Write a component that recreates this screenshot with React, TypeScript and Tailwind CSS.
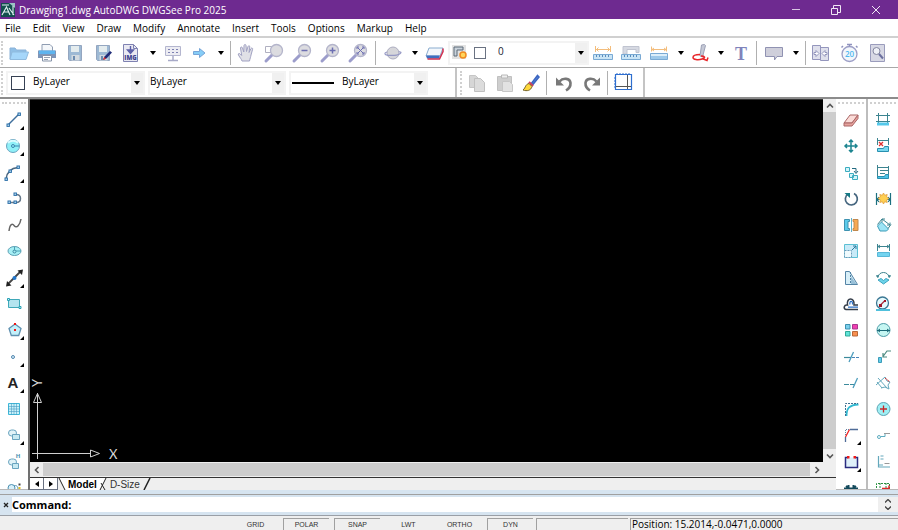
import type { ReactNode } from "react";
import clsx from "clsx";

interface IconProps {
  children: ReactNode;
  flyout?: boolean;
}

// Every icon is drawn on the same 20px grid
const Icon = ({ children, flyout }: IconProps) => (
  <svg viewBox="0 0 20 20" className="size-5 shrink-0 overflow-visible" fill="none" aria-hidden="true">
    {children}
    {flyout && <path d="M20 16v4h-4z" fill="#000" />}
  </svg>
);

const Node = ({ x, y }: { x: number; y: number }) => (
  <rect x={x - 1} y={y - 1} width="2.4" height="2.4" fill="#bfe0f5" stroke="#2c6fa8" strokeWidth="1" />
);

interface Tool {
  label: string;
  icon: ReactNode;
  flyout?: boolean;
}

/* ---------- shared pieces ---------- */

const ToolButton = ({ label, children, narrow }: { label: string; children: ReactNode; narrow?: boolean }) => (
  <button
    type="button"
    title={label}
    aria-label={label}
    className={clsx("flex h-7 shrink-0 items-center justify-center hover:bg-sky-100", narrow ? "w-6" : "w-7")}
  >
    <Icon>{children}</Icon>
  </button>
);

const Triangle = () => (
  <svg viewBox="0 0 6 4" className="h-1 w-1.5" aria-hidden="true">
    <path d="M0 0h6L3 4z" fill="#000" />
  </svg>
);

const MenuCaret = ({ label }: { label: string }) => (
  <button type="button" aria-label={label} className="flex h-7 w-4 shrink-0 items-center justify-center hover:bg-sky-100">
    <Triangle />
  </button>
);

const Divider = ({ wide }: { wide?: boolean }) => (
  <div className={clsx("flex h-6 shrink-0 justify-center", wide ? "w-[7px]" : "w-[3px]")}>
    <div className="w-px bg-[#b0b0b0]" />
  </div>
);

const Grip = () => <div className="mx-px h-6 w-0 shrink-0 border-l-2 border-dotted border-[#d0d0d0]" />;

interface ComboProps {
  label: string;
  value: string;
  lead?: ReactNode;
  className?: string;
}

const Combo = ({ label, value, lead, className }: ComboProps) => (
  <div className={clsx("flex h-6 shrink-0 items-center border-2 border-[#f3f3f3] bg-white", className)}>
    {lead}
    <select
      aria-label={label}
      defaultValue={value}
      className="h-5 min-w-0 flex-1 appearance-none bg-transparent pb-1 text-[10px] leading-4 outline-none"
    >
      <option>{value}</option>
    </select>
    <span className="pointer-events-none flex h-5 w-3 items-center justify-center bg-[#f0f0f0]">
      <Triangle />
    </span>
  </div>
);

/* ---------- title and menu ---------- */

const TitleBar = () => (
  <header className="flex h-[19px] shrink-0 items-center bg-[#6e2a90] pr-0.5 pl-px text-white">
    <svg viewBox="0 0 14 14" className="size-3.5" aria-hidden="true">
      <path d="M0 0h14v14H0z" fill="#14504f" />
      <path d="M8 0h6v5z" fill="#9bc4c4" />
      <path d="M1 2h7M1 12 5.5 4 9 12M3 9h5M8 5l5 7M12 3v9" stroke="#e4f4f4" strokeWidth="1.1" fill="none" />
    </svg>
    <h1 className="ml-1 flex-1 text-[10px] leading-4">Drawging1.dwg AutoDWG DWGSee Pro 2025</h1>
    <button type="button" aria-label="Minimize" className="flex h-4 w-10 items-center justify-center">
      <span className="h-px w-2 bg-[#d9c6e2]" />
    </button>
    <button type="button" aria-label="Restore" className="flex h-4 w-10 items-center justify-center">
      <svg viewBox="0 0 10 10" className="size-2.5" fill="none" stroke="#f0e6f4" aria-hidden="true">
        <path d="M.5 3.500h6v6h-6zM2.500 3V.5h7v7H7" />
      </svg>
    </button>
    <button type="button" aria-label="Close" className="flex h-4 w-10 items-center justify-center">
      <svg viewBox="0 0 10 10" className="size-2.5" fill="none" stroke="#f0e6f4" aria-hidden="true">
        <path d="m1 1 8 8M9 1 1 9" />
      </svg>
    </button>
  </header>
);

const menus = ["File", "Edit", "View", "Draw", "Modify", "Annotate", "Insert", "Tools", "Options", "Markup", "Help"];

const MenuBar = () => (
  <nav className="flex h-[19px] shrink-0 items-center gap-3 border-b-2 border-[#d0d0d0] bg-white px-[5px] text-[10px] leading-4">
    {menus.map((menu) => (
      <button key={menu} type="button">
        {menu}
      </button>
    ))}
  </nav>
);

/* ---------- toolbars ---------- */

const Floppy = () => (
  <>
    <path d="M3.5 2.500h13v15h-12l-1-1z" fill="#9db9d4" stroke="#94a6c0" />
    <path d="M6 3h8v6H6z" fill="#e4ecee" />
    <path d="M6.500 12h8v5.500h-8z" fill="#d3dae0" />
    <path d="M8 13h2v4H8z" fill="#6c8cb0" />
  </>
);

const Magnifier = ({ children }: { children?: ReactNode }) => (
  <>
    <path d="m2 18 6-6" stroke="#9c9dcb" strokeWidth="3" strokeLinecap="round" />
    <circle cx="12.500" cy="7.500" r="6" fill="#dcdce0" stroke="#b4b5cb" strokeWidth="1.300" />
    <g stroke="#6c6fb2" strokeWidth="1.500">{children}</g>
  </>
);

const Ruler = () => (
  <>
    <path d="M.500 11.500h19v5H.500z" fill="#c9e4f5" stroke="#7aaad4" />
    <path d="M3.500 12v2M6.500 12v2M9.500 12v2M12.500 12v2M15.500 12v2" stroke="#5a8cbc" />
  </>
);

const StandardToolbar = () => (
  <div role="toolbar" aria-label="Standard" className="flex h-[30px] shrink-0 items-center border-b border-[#a8a8a8] bg-white">
    <Grip />
    <div className="w-px shrink-0" />
    <ToolButton label="Open">
      <path d="M1 16V5h5l1.500 2H17v3" fill="#8fbfe6" stroke="#8bb2d8" />
      <path d="M3 9h16.500L17 16.500H1z" fill="#a5d6fa" stroke="#8fbade" />
    </ToolButton>
    <ToolButton label="Print">
      <path d="M5 8V1.500h8L15.500 4v4" fill="#f4f7fa" stroke="#8f9db2" />
      <path d="M1 7.500h18V15H1z" fill="#7e95b8" />
      <path d="M2 7.500h16V11H2z" fill="#5eb4ee" />
      <path d="M5.500 12.500h9v5.500h-9z" fill="#fff" stroke="#8593a8" />
      <path d="M7 14.500h6M7 16.500h4" stroke="#9aa5b4" />
    </ToolButton>
    <ToolButton label="Save"><Floppy /></ToolButton>
    <ToolButton label="Save as">
      <Floppy />
      <path d="m10 17 1.500-3.500L17 8l2 1.500-5.500 6z" fill="#202c78" />
      <path d="m10 17 1.200-3 2 1.800z" fill="#e03030" />
    </ToolButton>
    <ToolButton label="Export image">
      <path d="M2.500 1.500h10l4 4v13h-14z" fill="#e9e9f2" stroke="#7f82b2" />
      <path d="M12.500 1.500v4h4" stroke="#7f82b2" />
      <path d="M9.500 3v4M6.500 7h6l-3 3.500z" stroke="#5c60a8" strokeWidth="1.400" fill="#5c60a8" />
      <text x="9.500" y="17" textAnchor="middle" fontSize="6" fontWeight="800" fill="#3f438f">IMG</text>
    </ToolButton>
    <MenuCaret label="Export options" />
    <ToolButton label="Slides" narrow>
      <path d="M2.500 3.500h15v9h-15z" fill="#ececf2" stroke="#b4b6cf" />
      <path d="M5 6.500h2M9 6.500h2M13 6.500h2M5 9.500h2M9 9.500h2M13 9.500h2" stroke="#7c80b2" />
      <path d="M10 13v4M5 17.500h10" stroke="#a8aac8" strokeWidth="1.500" />
    </ToolButton>
    <ToolButton label="Next view">
      <path d="M4.500 8.500h6V5.500l5.500 4.500-5.500 4.500v-3h-6z" fill="#86cdf7" stroke="#76a5d8" />
    </ToolButton>
    <MenuCaret label="View options" />
    <Divider />
    <ToolButton label="Pan">
      <path
        d="M6 18c-.5-2-2-3-3.500-6-.8-1.500.7-2 1.700-1l1.500 1.500L4.500 5c0-1.200 1.500-1.500 2 0l1.300 4L8 2.500c.2-1.300 1.900-1.300 2 0l.5 6L12 3.500c.5-1.200 2-.8 1.800.5L13 9.500l2-4c.6-1 2-.4 1.600.8L15 12c-.3 2-1 3.500-1.500 6z"
        fill="#e0e0e6"
        stroke="#a0a1c2"
      />
    </ToolButton>
    <ToolButton label="Zoom window">
      <path d="M1.500 3.500h7v6h-7z" stroke="#b0b0c0" />
      <Magnifier />
    </ToolButton>
    <ToolButton label="Zoom out"><Magnifier><path d="M9.500 7.500h6" /></Magnifier></ToolButton>
    <ToolButton label="Zoom in"><Magnifier><path d="M9.500 7.500h6M12.500 4.500v6" /></Magnifier></ToolButton>
    <ToolButton label="Zoom extents">
      <Magnifier><path d="m9.500 4.500 6 6M15.500 4.500l-6 6M9 6V4h2M14 4h2v2M9 9v2h2M14 11h2V9" strokeWidth="1" /></Magnifier>
    </ToolButton>
    <Divider wide />
    <ToolButton label="Orbit">
      <circle cx="10" cy="10" r="6" fill="#d6d6da" stroke="#acadc0" />
      <path d="M4 9c-3 1-3 3 1 3.300 4 .300 10-.300 12-1.600 2-1.300.5-2.200-1.300-1.900" stroke="#9598c4" strokeWidth="1.200" />
    </ToolButton>
    <MenuCaret label="Orbit options" />
    <ToolButton label="Erase markup" narrow>
      <path d="M4 5h14l-3 8H1z" fill="#f4f8fc" stroke="#8aaccf" />
      <path d="M1 12.500h13.500v3H2z" fill="#3f6fc0" />
      <path d="M18 5.500v3L14.500 16h-12" stroke="#d03050" strokeWidth="1.500" />
    </ToolButton>
    <Combo
      label="Layer"
      value="0"
      className="ml-px w-[141px] text-[#223]"
      lead={
        <>
          <Icon>
            <path d="M2 2h14v14H2z" fill="#e2e2e2" />
            <path d="M4 4h9v3H7v6H4z" fill="#c9d2da" stroke="#5d6b78" />
            <circle cx="13" cy="12" r="3" fill="#ffd55c" stroke="#f08a20" strokeWidth="1.500" />
          </Icon>
          <span className="mr-3 ml-1 size-3 border border-gray-500 bg-white" />
        </>
      }
    />
    <ToolButton label="Distance">
      <Ruler />
      <path d="M2.500 3v6M17.500 3v6M3 6.500h14M5.500 4.500l-2 2 2 2M14.500 4.500l2 2-2 2" stroke="#f3bd7c" />
    </ToolButton>
    <ToolButton label="Measure polyline">
      <path d="M2 11V3.500h16v6h-3v-3H6V11z" fill="#d6d9e2" stroke="#c0c4d0" />
      <Ruler />
    </ToolButton>
    <ToolButton label="Area">
      <path d="M1.500 10.500h17v6h-17z" fill="#9ec9ea" stroke="#7aaad4" />
      <path d="M2 11h16v2H2z" fill="#dceefa" />
      <path d="M2.500 3.500v5M17.500 3.500v5M3 6.500h14M5 5 3 6.500 5 8M15 5l2 1.500L15 8" stroke="#f3bd7c" />
    </ToolButton>
    <MenuCaret label="Measure options" />
    <ToolButton label="Freehand markup" narrow>
      <path d="m9 13 1.500-11 3-.5 1 1L11.500 14z" fill="#c5c9d6" stroke="#9ca0b6" />
      <path d="M9 11.500c-4 0-7 1-7 3s5 3 9 1.500 3-3-1-3M11 15.500l5 2 1-3" stroke="#e8262a" strokeWidth="1.500" />
    </ToolButton>
    <MenuCaret label="Markup options" />
    <ToolButton label="Text" narrow>
      <text x="10" y="16.500" textAnchor="middle" fontSize="18" className="font-['Liberation_Serif',serif] font-bold" fill="#8083bb">T</text>
    </ToolButton>
    <Divider wide />
    <ToolButton label="Callout">
      <path d="M1.500 4.500h17v9H13l-2.500 3.500v-3.500h-9z" fill="#cfcfdb" stroke="#9092b2" />
    </ToolButton>
    <MenuCaret label="Callout options" />
    <Divider />
    <ToolButton label="Compare">
      <path d="M1.500 2.500h8v14h-8zM9.500 4.500h8v13h-8z" fill="#dfe0ec" stroke="#9496bd" />
      <path d="M3 9.500h2v-2l3 3-3 3v-2H3zM16 9.500h-2v-2l-3 3 3 3v-2h2z" fill="#fff" stroke="#9496bd" />
    </ToolButton>
    <ToolButton label="Timer">
      <circle cx="10.500" cy="11" r="7.500" fill="#f3f7fb" stroke="#9c9ec6" strokeWidth="1.300" />
      <path d="M8 1.500h5M10.500 1.500v2M4 3 2.500 4.500M17 3l1.500 1.500" stroke="#8f92be" strokeWidth="1.500" />
      <text x="10.500" y="14" textAnchor="middle" fontSize="8" fontWeight="600" fill="#4fb8f0">20</text>
    </ToolButton>
    <ToolButton label="Find">
      <path d="M3.500 1.500h14v17h-14z" fill="#d7d8e4" stroke="#9a9cbc" />
      <circle cx="9.500" cy="8" r="3.500" fill="#eef0f6" stroke="#83869f" />
      <path d="m12 11 4 4.500" stroke="#6c6f9f" strokeWidth="2" />
    </ToolButton>
  </div>
);

const PropertiesToolbar = () => (
  <div role="toolbar" aria-label="Properties" className="flex h-[31px] shrink-0 items-center border-b-2 border-[#8c8c8c] bg-white">
    <Grip />
    <div className="ml-0.5 flex gap-[3px]">
      <Combo
        label="Color"
        value="ByLayer"
        className="w-[139px]"
        lead={<span className="mr-2 ml-[3px] size-3.5 border border-gray-700 bg-white" />}
      />
      <Combo label="Linetype" value="ByLayer" className="w-[138px]" />
      <Combo label="Lineweight" value="ByLayer" className="w-[139px]" lead={<span className="mr-2 ml-px h-0.5 w-[42px] bg-black" />} />
    </div>
    <div className="ml-[27px] h-full w-0.5 shrink-0 bg-[#c4c4c4]" />
    <div className="ml-0.5 flex items-center">
      <Grip />
      <ToolButton label="Copy">
        <path d="M2.500 2.500h6l3 3v9h-9z" fill="#d6d6d6" stroke="#c6c6c6" />
        <path d="M7.500 5.500h6l4 4v9h-10z" fill="#dcdcdc" stroke="#c0c0c0" />
      </ToolButton>
      <ToolButton label="Paste">
        <path d="M2.500 3.500h14v14h-14z" fill="#cecece" stroke="#c0c0c0" />
        <path d="M6.500 2h6v3h-6z" fill="#efefef" stroke="#b8b8b8" />
        <path d="M7.500 8.500h7l3 3v7h-10z" fill="#e2e2e2" stroke="#c6c6c6" />
      </ToolButton>
      <ToolButton label="Match properties" narrow>
        <path d="m10 11 6.500-8.500 1.500 1.500-6.500 8z" fill="#5a8ae0" stroke="#3c66c0" strokeWidth="1.500" />
        <path d="m8 9 4 4" stroke="#d04060" strokeWidth="2" />
        <path d="M8 10.500c-4 1-3 4-6 6.500 4 1.500 8 .500 9-3.500z" fill="#ffd83c" stroke="#74642a" />
      </ToolButton>
      <Divider wide />
      <ToolButton label="Undo">
        <path d="M5.500 8.500C9 4.500 16 5 16.500 10c.200 3-2 6-4.500 7.500" stroke="#787878" strokeWidth="2.600" />
        <path d="M2 4.500v8h8z" fill="#787878" />
      </ToolButton>
      <ToolButton label="Redo">
        <path d="M14.500 8.500C11 4.500 4 5 3.500 10c-.200 3 2 6 4.500 7.500" stroke="#787878" strokeWidth="2.600" />
        <path d="M18 4.500v8h-8z" fill="#787878" />
      </ToolButton>
      <Divider />
      <ToolButton label="Ruler">
        <path d="M2.500 1.500h16v15h-16z" stroke="#2e6fd0" strokeWidth="1.200" />
        <path d="M4 0v2M7 0v2M10 0v2M13 0v2M16 0v2M1 5h2M1 8h2M1 11h2M1 14h2" stroke="#2e6fd0" />
        <path d="M14.500 2v14M3 13.500h15" stroke="#555" />
      </ToolButton>
    </div>
    <div className="ml-1.5 h-full w-0.5 shrink-0 bg-[#c4c4c4]" />
  </div>
);

/* ---------- palettes ---------- */

const drawTools: Tool[] = [
  { label: "Line", flyout: true, icon: <><path d="M4 15 15 4" stroke="#3f6f9c" strokeWidth="1.500" /><Node x={4} y={15} /><Node x={15} y={4} /></> },
  {
    label: "Circle",
    flyout: true,
    icon: <><circle cx="9" cy="10" r="6.500" fill="#8ff0f8" stroke="#6aa4c0" /><path d="M4 7c2-3 8-3 10 0" stroke="#d9fbff" strokeWidth="2" /><circle cx="9" cy="10" r="1.500" stroke="#3c86b0" /><path d="M10.500 10H15" stroke="#3c86b0" /></>,
  },
  { label: "Arc", flyout: true, icon: <><path d="M2 16C3 9 7 5 14 4.500" stroke="#4b6780" strokeWidth="1.500" /><Node x={2} y={16} /><Node x={6} y={8} /><Node x={14} y={4} /></> },
  { label: "Polyline", icon: <><path d="M5 13.500h7c6 0 6-8 0-8" stroke="#66788a" strokeWidth="1.500" /><Node x={5} y={13} /><Node x={11} y={13} /><Node x={11} y={5} /></> },
  { label: "Spline", icon: <path d="M5 16C6 8 8.500 8.500 10.500 11S16 10 17 4" stroke="#666" strokeWidth="1.500" /> },
  { label: "Ellipse", icon: <><ellipse cx="10.500" cy="10" rx="6.500" ry="4.500" fill="#a5eff5" stroke="#5fa0b4" /><circle cx="10.500" cy="10.500" r="1.500" stroke="#3c86a0" /><path d="M10.500 5.500v4M12 10h5" stroke="#4aa0b4" /></> },
  {
    label: "Construction line",
    flyout: true,
    icon: <><path d="m4 16 13-13" stroke="#444" strokeWidth="1.800" /><path d="M2 18.500 3 13l4.500 4.500zM19 1.500 18 7l-4.500-4.500z" fill="#222" /><circle cx="10.500" cy="10" r="2" fill="#2277cc" /></>,
  },
  { label: "Rectangle", icon: <><path d="M4.500 5.500h11v8h-11z" fill="#b4e4ef" stroke="#3fa8b8" /><path d="M3.500 4.500h2v2h-2zM15 12.500h2v2h-2z" fill="#c8f4fa" stroke="#28a0b4" /></> },
  { label: "Polygon", flyout: true, icon: <><path d="m11 4 6 4.500-2.300 7H7.300L5 8.500z" fill="#c3f0fa" stroke="#5f90b0" strokeWidth="1.300" /><path d="M10 9h2v2h-2zM10 3h2v2h-2z" fill="#f01818" /></> },
  { label: "Point", flyout: true, icon: <circle cx="9" cy="10" r="1.500" stroke="#5488b0" fill="#d8f0fa" /> },
  { label: "Text", flyout: true, icon: <text x="9" y="15" textAnchor="middle" fontSize="15" fontWeight="700" className="font-['Liberation_Sans',Arial,sans-serif]" fill="#222">A</text> },
  { label: "Hatch", icon: <><path d="M4.500 4.500h11v11h-11z" fill="#c9f2fa" stroke="#3cb8d8" /><path d="M4 7.500h12M4 10h12M4 12.500h12M7.500 4v12M10 4v12M12.500 4v12" stroke="#4c9cc4" strokeWidth=".6" /></> },
  { label: "Region", flyout: true, icon: <><rect x="4.500" y="5" width="8" height="6" rx="3" fill="#e1f3f8" stroke="#6aa4bf" /><path d="M8.500 9.500h7v5h-7z" fill="#c8eaf2" stroke="#6aa4bf" /></> },
  { label: "Region hatch", icon: <><rect x="4.500" y="7" width="8" height="6" rx="3" fill="#e1f3f8" stroke="#6aa4bf" /><path d="M8.500 11.500h6v5h-6z" fill="#c8eaf2" stroke="#6aa4bf" /><text x="14" y="6" textAnchor="middle" fontSize="6" fontWeight="700" fill="#4a8fb0">H</text></> },
  { label: "Revision cloud", icon: <><circle cx="7.500" cy="10" r="3.500" fill="#d8f0fa" stroke="#4a8fb0" /><path d="M10 8c2-1 4 0 4 3" stroke="#4a8fb0" /><path d="M14.500 5.500h2v2h-2z" fill="#444" /><path d="M14.500 9h2v2h-2z" fill="#e8c020" /></> },
];

const modifyTools: Tool[] = [
  { label: "Erase", icon: <><path d="M3 13 9 5h8l-6 8z" fill="#fbdcd8" stroke="#a66" /><path d="M3 13v3h8l6-7.500V5l-6 8z" fill="#e5a29c" stroke="#a66" /></> },
  { label: "Move", icon: <path d="M10 4v12M4 10h12M8 6l2-2 2 2M8 14l2 2 2-2M6 8l-2 2 2 2M14 8l2 2-2 2" stroke="#1d8590" strokeWidth="1.500" /> },
  { label: "Copy", icon: <><path d="M4.500 4.500h4v4h-4zM8.500 10.500h4v4h-4zM11.500 12.500h5v4h-5z" fill="#d3f5fa" stroke="#3cacc0" /><path d="M11 5.500h4v4M13 8l2 2.500L17 8" stroke="#226a80" /></> },
  { label: "Rotate", icon: <><path d="M7 5a6 6 0 1 0 6-.4" stroke="#46667f" strokeWidth="1.700" /><path d="M3.500 4H9v5z" fill="#157a86" /></> },
  { label: "Mirror", icon: <><path d="M3.500 4.500h5v2H7v7h1.500v2h-5z" fill="#5ccbea" stroke="#3f92b0" /><path d="M17 4.500h-5v2h1v7h-1v2h5z" fill="#f8a850" stroke="#c0884c" /><path d="M10.500 3v14" stroke="#5fb4cc" /></> },
  { label: "Scale", icon: <><path d="M3.500 3.500h13v13h-13z" fill="#c8eaf8" stroke="#5cc0d4" /><path d="M3.500 9.500h7v7h-7z" fill="#f0fafd" stroke="#6a9cba" strokeDasharray="2 1" /><path d="m11 9 4-4M12 5h3v3" stroke="#2a7ca0" /></> },
  { label: "Stretch", icon: <><path d="M4.500 3.500h4l8 13h-12z" fill="#d8eff8" stroke="#5484a6" /><path d="M9.500 4v12" stroke="#5484a6" strokeDasharray="2 1" /><path d="M10 8.500 15.500 16H10z" fill="#98c0d8" /></> },
  { label: "Offset", icon: <><path d="M17 15.500H5c-3-1-2-5 1.500-4.500C5 3 14 3 13 11h4" stroke="#333c48" strokeWidth="1.500" /><path d="M17 13.200H7M9 10.500c-1-4 3-4.500 2.500 0" stroke="#2a70c8" strokeWidth="1.200" /></> },
  {
    label: "Array",
    icon: <><path d="M4.500 4.500h4.500v4.500h-4.500z" fill="#7cd0ec" stroke="#3c90b0" /><path d="M11.500 4.500h5v4.500h-5z" fill="#f040b0" stroke="#a83890" /><path d="M4.500 11.500h4.500v4.500h-4.500z" fill="#60e4d8" stroke="#30a898" /><path d="M11.500 11.500h5v4.500h-5z" fill="#f89050" stroke="#b86838" /></>,
  },
  { label: "Trim", icon: <><path d="M3 10.500h7" stroke="#3c8a9c" strokeWidth="1.200" /><path d="M8 15 12.500 5" stroke="#4c9cbc" strokeWidth="1.300" /><path d="M11 10.500h7" stroke="#4884b8" strokeDasharray="3 1" /></> },
  { label: "Extend", icon: <><path d="M3 11.500h10" stroke="#3c8a9c" strokeWidth="1.200" strokeDasharray="5 1" /><path d="M12 15 16.500 5" stroke="#4c9cbc" strokeWidth="1.300" /></> },
  { label: "Fillet", icon: <><path d="M5.500 17c0-8 3-11 12-11.500" stroke="#30b8d0" strokeWidth="1.800" /><path d="M4.500 17V4.500H17" stroke="#3f6f90" strokeDasharray="2 1" /></> },
  { label: "Chamfer", flyout: true, icon: <><path d="M4.500 17v-5M9 4.500h8" stroke="#4f6c98" strokeWidth="1.300" /><path d="m4.500 12 4-7.500" stroke="#f02020" strokeWidth="1.300" /><path d="M4.500 10V4.500H8" stroke="#6080a0" strokeDasharray="1 1" /></> },
  { label: "Break", flyout: true, icon: <><path d="M7 5.500H4.500v10h12v-10H14" fill="#dff0fa" stroke="#2a2c80" strokeWidth="1.500" /><path d="M6 4h2.500v2.500H6zM12.500 4H15v2.500h-2.500z" fill="#f01818" /></> },
  { label: "Join", icon: <path d="M3 10.500h14M5 8l3.500 2.500M15 8l-3.500 2.500M7.500 7v4M12.500 7v4" stroke="#144a5c" strokeWidth="2" /> },
];

const dimensionTools: Tool[] = [
  { label: "Linear dimension", icon: <><path d="M3 5.500h14M3 11.500h14M5.500 3v10M14.500 3v10" stroke="#3c8490" /><path d="M4 12.500h12v3H4z" fill="#54c8ea" /></> },
  { label: "Delete dimension", icon: <><path d="M4 4.500h12M4.500 2v7M15.500 2v7" stroke="#3c8490" /><path d="m6 6 4 4M10 6l-4 4" stroke="#e03030" strokeWidth="1.300" /><path d="M4.500 12.500h6l1-2h4v5h-11z" fill="#7ad8ee" stroke="#2890b0" /></> },
  { label: "Baseline dimension", icon: <><path d="M4 4.500h12M4.500 2v12M15.500 3v10M7 7.500h8M7 10.500h5" stroke="#3c8490" /><path d="M4.500 13.500h7l1-2h3v4h-11z" fill="#4cc4e8" stroke="#2890b0" /></> },
  { label: "Quick dimension", icon: <><path d="M3.500 4v12M17.500 4v12M4 10.500h13M6 8l-2 2.500L6 13M15 8l2 2.500-2 2.500" stroke="#1c7080" strokeWidth="1.200" /><path d="m10.500 4 1.200 2.300 2.500-.800-.600 2.500 2.400 1.500-2.400 1.500.600 2.500-2.500-.800-1.200 2.300-1.200-2.300-2.500.800.600-2.500L5 9.500 7.400 8l-.600-2.500 2.500.800z" fill="#ffcf50" stroke="#e0a040" strokeWidth=".8" /></> },
  { label: "Aligned dimension", icon: <><path d="m4.500 11 4-4 7 7-2 2H7z" fill="#9ce4f6" stroke="#3c9cb8" /><path d="M4.500 9.500 9 4M15 13.500l3-4M9 4l8 6M9 7V4h3M14 10h3V7.500" stroke="#3c8490" /></> },
  { label: "Horizontal dimension", icon: <><path d="M4.500 3v7M16.500 3v7M5 5.500h11M7 4 5 5.500 7 7M14 4l2 1.500L14 7" stroke="#3c8490" /><path d="M4.500 11.500h12v4h-12z" fill="#74d4f0" stroke="#58b8d8" /></> },
  { label: "Arc length", icon: <><path d="M5 9c1-6 10-6 11 0M5 10l-1-3M16 10l1-3M3 8h3M15 8h3" stroke="#3c8490" /><path d="m5 12 3-1.500 2.500 2 2.500-2 3 1.500-5.500 4z" fill="#6ed4ea" stroke="#3ca4c0" /></> },
  { label: "Radius", icon: <><circle cx="9.500" cy="9" r="6" fill="#e7fafd" stroke="#3c7894" strokeWidth="1.300" /><path d="m7 11.500 5-5" stroke="#a83040" strokeWidth="1.200" /><path d="M6 10h3v3H6zM11 6h2v2h-2z" fill="#a01828" /><path d="M3 16h14" stroke="#50c0dc" strokeWidth="2" /></> },
  { label: "Diameter", icon: <><circle cx="10.500" cy="10" r="6.500" fill="#c5f6f2" stroke="#4c9ca8" /><path d="M4 10.500h13M7 9l-2 1.500L7 12M14 9l2 1.500-2 1.500" stroke="#1c6a78" /></> },
  { label: "Leader", icon: <><path d="M5.500 10.500h3v5h-3z" fill="#64cdea" stroke="#3c9cb8" /><path d="M10 9.500 14 4h4M10 6v4h4" stroke="#4c8a80" strokeWidth="1.200" /></> },
  { label: "Angular", icon: <><path d="m5 5 9 10M3 12l9-8M4 9l5 6M12 4l2 4 3 1-2 3 1 4-4-2-4 1" stroke="#64a8bc" /><path d="m12 5 5 4" stroke="#e82020" strokeDasharray="2 1" /></> },
  { label: "Center mark", icon: <><circle cx="10.500" cy="10" r="6.500" fill="#9eeff4" stroke="#5ca4b4" /><path d="M10.500 6.500v7M7 10h7" stroke="#c82828" strokeWidth="1.300" /></> },
  { label: "Ordinate", icon: <><circle cx="6" cy="12" r="1.500" stroke="#5cacc0" /><path d="M8 11.500h4v-3h5" stroke="#5cacc0" /><path d="M11 8.500h6" stroke="#999" /></> },
  { label: "Datum", icon: <><path d="M5.500 4v11H17M7.500 4h3M7.500 7h3M5 13h5" stroke="#64a8bc" strokeWidth="1.200" /><path d="M11.500 11.500h5" stroke="#999" /></> },
  { label: "Tolerance", icon: <><path d="M3.500 16V5.500h13V16M7 5v6M13 5v6" stroke="#2a9040" strokeDasharray="2 1" /><path d="M9 10.500h7v-3" stroke="#e02828" strokeWidth="1.500" /></> },
];

const Palette = ({ label, tools, className }: { label: string; tools: Tool[]; className?: string }) => (
  <div role="toolbar" aria-label={label} className={clsx("flex shrink-0 flex-col overflow-hidden border-b border-[#b8b8b8] bg-white", className)}>
    <div className="mx-0.5 mt-[3px] mb-[3px] h-0 border-t-2 border-dotted border-[#d0d0d0]" />
    {/* the last row runs under the command line */}
    <ul className="-mb-3 flex min-h-0 flex-1 flex-col">
      {tools.map((tool) => (
        <li key={tool.label} className="flex min-h-0 flex-1">
          <button type="button" title={tool.label} aria-label={tool.label} className="flex w-full items-center justify-center hover:bg-sky-100">
            <Icon flyout={tool.flyout}>{tool.icon}</Icon>
          </button>
        </li>
      ))}
    </ul>
  </div>
);

/* ---------- drawing area ---------- */

const ScrollArrow = ({ label, d }: { label: string; d: string }) => (
  <button type="button" aria-label={label} className="flex size-[13px] shrink-0 items-center justify-center bg-[#efefef]">
    <svg viewBox="0 0 8 8" className="size-2" fill="none" stroke="#555" strokeWidth="1.600" aria-hidden="true">
      <path d={d} />
    </svg>
  </button>
);

const UcsIcon = () => (
  <svg viewBox="0 0 94 90" className="absolute bottom-0 left-0 h-[90px] w-[94px] font-['Lato',sans-serif]" fill="none" stroke="#d0d0d0" aria-hidden="true">
    <path d="M7.500 87V21M2 81.500h58M3.500 30.500h8l-4-9zM60.500 78v7l9-3.500z" />
    <text x="79" y="87" fontSize="13" stroke="none" fill="#d8d8d8">X</text>
    <text transform="rotate(-90 12 15)" x="12" y="15" fontSize="13" stroke="none" fill="#d8d8d8">Y</text>
  </svg>
);

const TabNav = ({ label, d }: { label: string; d: string }) => (
  <button type="button" aria-label={label} className="flex h-full w-3.5 items-center justify-center border-r border-b border-gray-500 bg-white">
    <svg viewBox="0 0 6 6" className="size-1.5" aria-hidden="true">
      <path d={d} fill="#000" />
    </svg>
  </button>
);

const SheetTabs = () => (
  <div className="flex h-[13px] shrink-0 items-stretch border-t border-[#333] bg-[#efefef] font-['Liberation_Sans',Arial,sans-serif] text-[10px] leading-[13px]">
    <TabNav label="Previous sheet" d="M5 0v6L1 3z" />
    <TabNav label="Next sheet" d="M1 0v6l4-3z" />
    <div role="tablist" className="flex">
      <svg viewBox="0 0 8 12" className="h-3 w-2" aria-hidden="true">
        <path d="M1 0h7v12H7z" fill="#fff" />
        <path d="m1 0 6 12" stroke="#222" />
      </svg>
      <button type="button" role="tab" aria-selected="true" className="bg-white px-0.5 font-bold">Model</button>
      <svg viewBox="0 0 8 12" className="h-3 w-2" aria-hidden="true">
        <path d="M0 0h7L1 12H0z" fill="#fff" />
        <path d="M7 0 1 12M2 5l4 7" stroke="#222" fill="none" />
      </svg>
      <button type="button" role="tab" aria-selected="false" className="px-[3px] text-[#333]">D-Size</button>
      <svg viewBox="0 0 8 12" className="h-3 w-2" aria-hidden="true">
        <path d="M7 0 1 12" stroke="#222" strokeWidth="1.500" />
      </svg>
    </div>
  </div>
);

const DrawingArea = () => (
  <main className="flex min-w-0 flex-1 flex-col border-l-2 border-[#707070]">
    <div className="flex min-h-0 flex-1">
      <div className="relative min-w-0 flex-1 border-t border-[#333] bg-black">
        <UcsIcon />
      </div>
      <div className="flex flex-col bg-[#cdcdcd]">
        <ScrollArrow label="Scroll up" d="M1 5.500 4 2.500l3 3" />
        <div className="flex-1" />
        <ScrollArrow label="Scroll down" d="m1 2.500 3 3 3-3" />
      </div>
    </div>
    <div className="flex h-[15px] shrink-0 items-center bg-[#efefef] pr-[13px]">
      <ScrollArrow label="Scroll left" d="M5.500 1 2.500 4l3 3" />
      <div className="h-[13px] flex-1 bg-[#cdcdcd]" />
      <ScrollArrow label="Scroll right" d="m2.500 1 3 3-3 3" />
    </div>
    <SheetTabs />
  </main>
);

/* ---------- bottom ---------- */

const CommandLine = () => (
  <div className="shrink-0 border-b border-[#9a9fa6] bg-[#d6e4f0]">
    <div className="h-1" />
    <div className="flex items-center border-t border-[#a0a0a0] pt-0.5 pb-[3px]">
      <button type="button" aria-label="Close command line" className="flex h-[15px] w-3 items-center justify-center">
        <svg viewBox="0 0 6 6" className="size-1.5" stroke="#222" strokeWidth="1.300" aria-hidden="true">
          <path d="m1 1 4 4M5 1 1 5" />
        </svg>
      </button>
      <div className="flex h-[15px] flex-1 items-center bg-white">
        <label htmlFor="command" className="text-[11px] leading-[15px] font-bold">Command:</label>
        <input id="command" type="text" className="ml-1 h-[15px] min-w-0 flex-1 text-[11px] outline-none" />
      </div>
      <div className="flex h-[15px] w-5 flex-col items-center justify-between bg-[#efefef] py-0.5">
        <svg viewBox="0 0 6 4" className="h-1 w-1.5" stroke="#444" strokeWidth="1.300" fill="none" aria-hidden="true"><path d="m0 3.500 3-3 3 3" /></svg>
        <svg viewBox="0 0 6 4" className="h-1 w-1.5" stroke="#444" strokeWidth="1.300" fill="none" aria-hidden="true"><path d="m0 .500 3 3 3-3" /></svg>
      </div>
    </div>
  </div>
);

const modes = [
  { name: "GRID", on: false },
  { name: "POLAR", on: true },
  { name: "SNAP", on: true },
  { name: "LWT", on: false },
  { name: "ORTHO", on: false },
  { name: "DYN", on: true },
];

const StatusBar = () => (
  <footer className="flex h-3.5 shrink-0 items-stretch overflow-hidden bg-[#efefef] pt-0.5 pl-[232px]">
    <div className="flex shrink-0 gap-[5px] font-['Liberation_Sans',Arial,sans-serif] text-[7px] leading-[11px] text-[#333]">
      {modes.map((mode) => (
        <button
          key={mode.name}
          type="button"
          aria-pressed={mode.on}
          className={clsx("w-[46px] border-t border-l", mode.on ? "border-[#a0a0a0]" : "border-transparent")}
        >
          {mode.name}
        </button>
      ))}
    </div>
    <div className="ml-[3px] w-[92px] shrink-0 border-t border-l border-[#a0a0a0]" />
    <div className="ml-0.5 min-w-0 flex-1 border-t border-l border-[#a0a0a0] pl-px text-[10px] leading-[11px] whitespace-nowrap">
      Position: 15.2014,-0.0471,0.0000
    </div>
  </footer>
);

export default function App() {
  return (
    <div className="flex h-screen flex-col overflow-hidden bg-[#efefef] font-['Open_Sans','Noto_Sans',sans-serif] text-black">
      <TitleBar />
      <MenuBar />
      <StandardToolbar />
      <PropertiesToolbar />
      <div className="flex min-h-0 flex-1">
        <Palette label="Draw" tools={drawTools} className="w-7" />
        <DrawingArea />
        <Palette label="Modify" tools={modifyTools} className="w-[30px]" />
        <Palette label="Dimension" tools={dimensionTools} className="w-8 border-l-2 border-l-[#bdbdbd]" />
      </div>
      <CommandLine />
      <StatusBar />
    </div>
  );
}
